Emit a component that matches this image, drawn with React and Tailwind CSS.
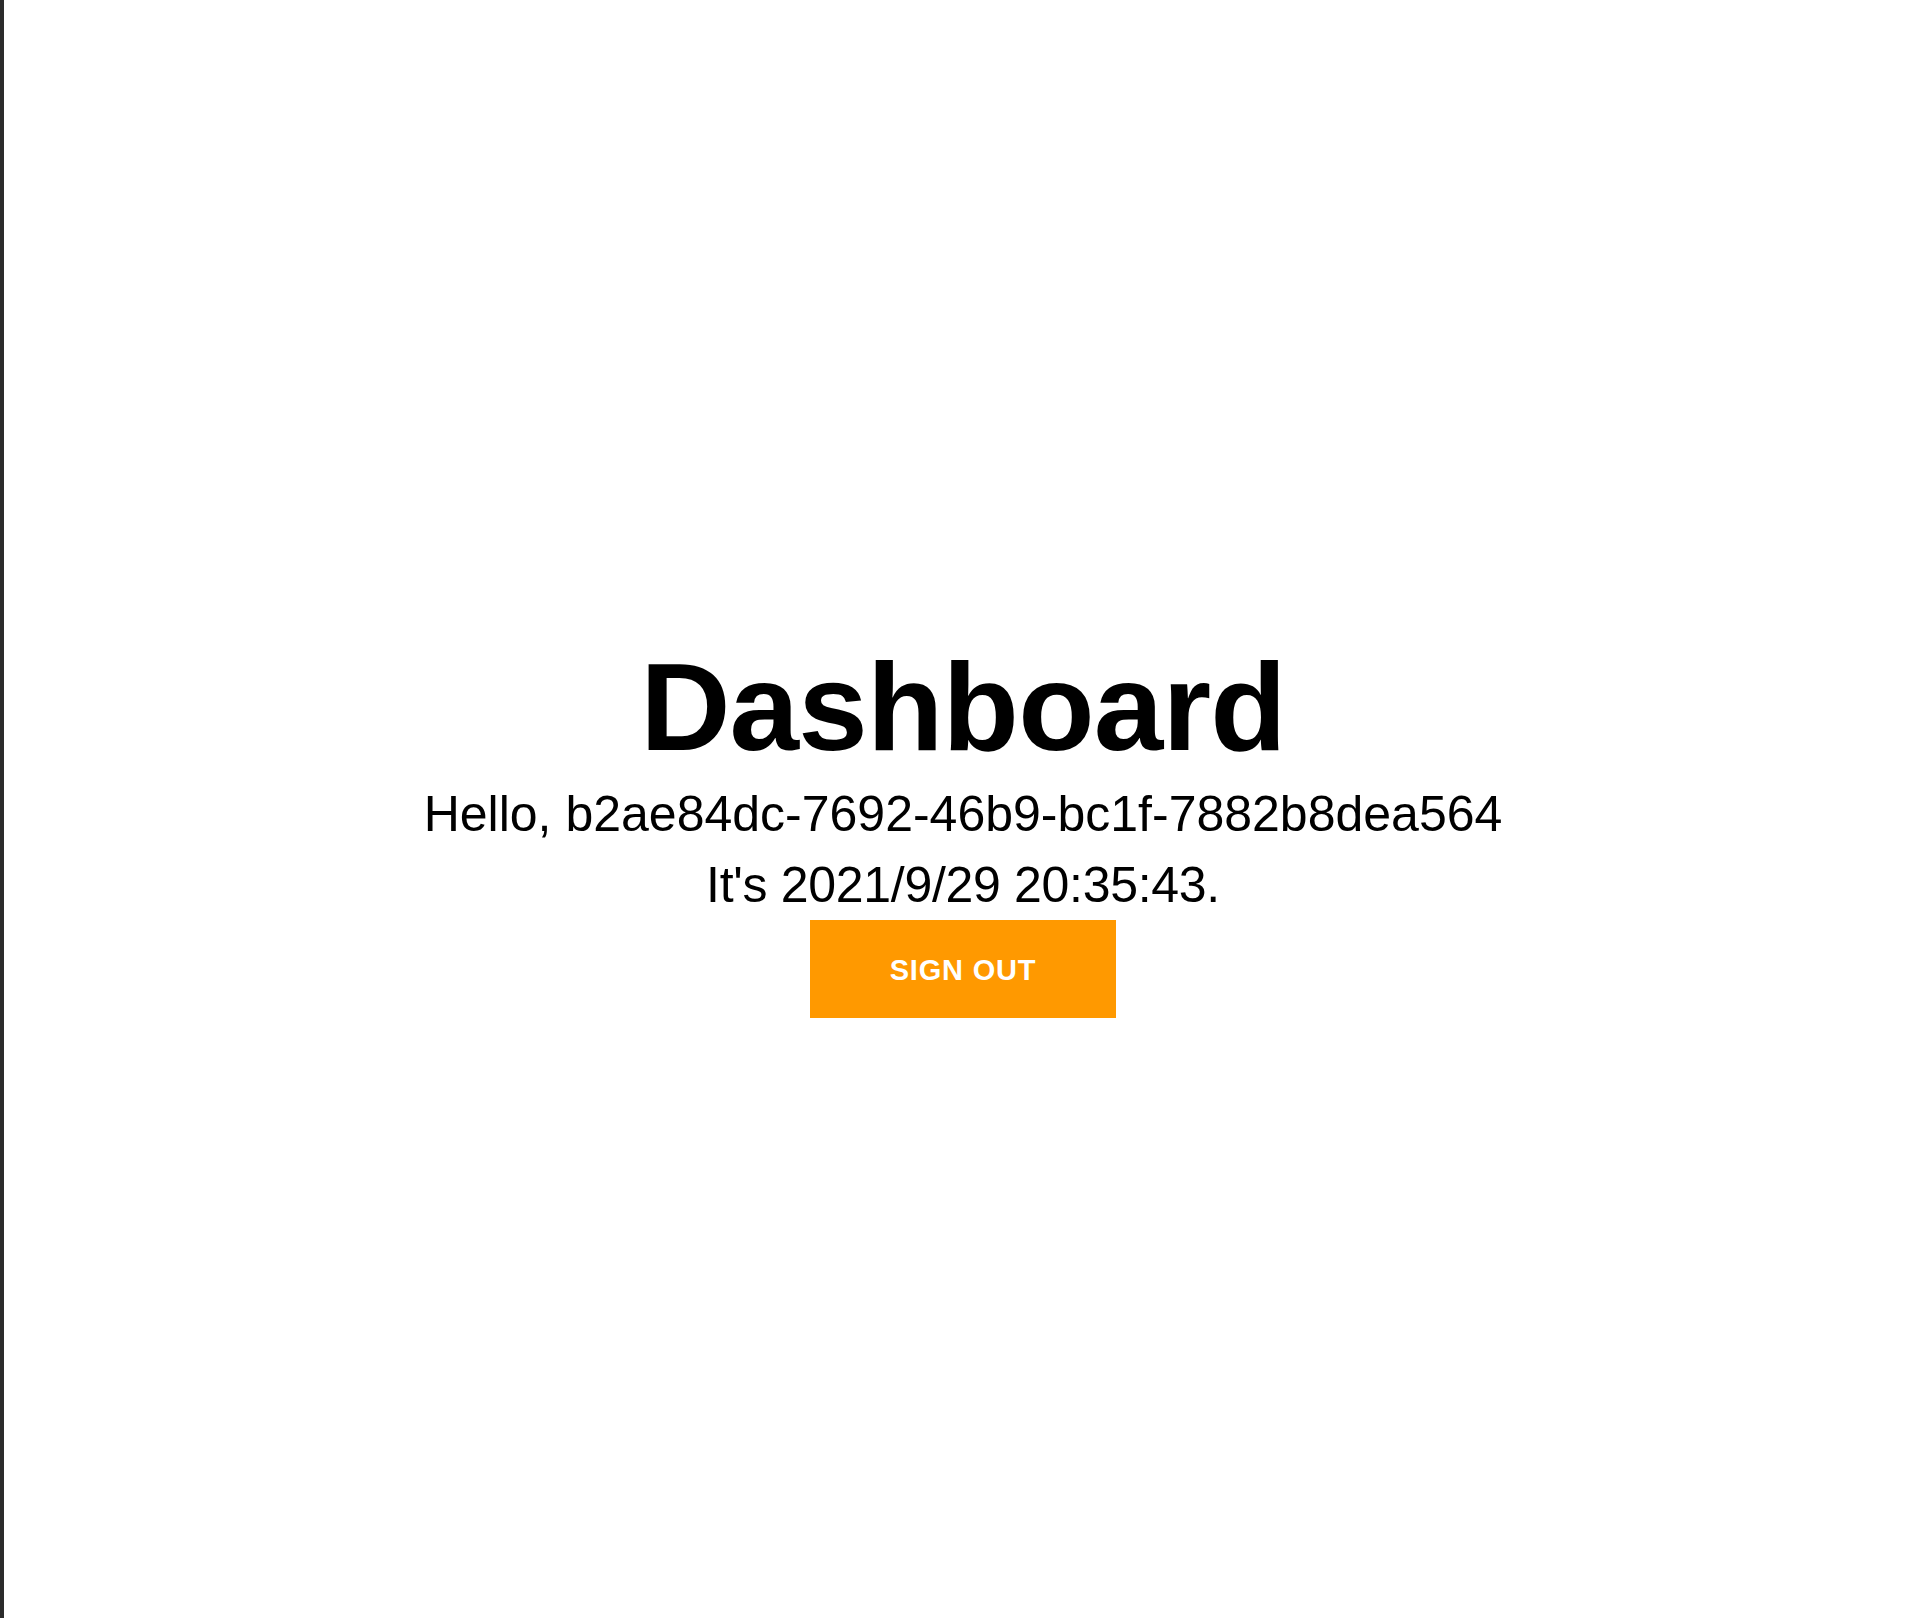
import React from 'react'

function App() {
    const userId = 'b2ae84dc-7692-46b9-bc1f-7882b8dea564';
    const now = '2021/9/29 20:35:43';

    return (
        <div className='min-h-[1618px] bg-white border-l-4 border-[#2b2b2b] text-black' style={{ fontFamily: '"Liberation Sans", Arial, sans-serif' }}>
            <div className='flex flex-col items-center pt-[644px] pl-1'>
                {/* Heading */}
                <h1 className='text-[125px] leading-none font-bold tracking-[-0.8px]'>Dashboard</h1>
                <p className='mt-[10px] text-[50px] leading-[71px]'>Hello, {userId}</p>
                <p className='text-[50px] leading-[71px] tracking-[-0.3px]'>It's {now}.</p>

                {/* Sign out */}
                <button className='w-[306px] h-[98px] -mt-px pt-[3px] bg-[#ff9900] text-white text-[29px] font-bold tracking-[0.8px] uppercase'>
                    Sign Out
                </button>
            </div>
        </div>
    );
}

export default App;
